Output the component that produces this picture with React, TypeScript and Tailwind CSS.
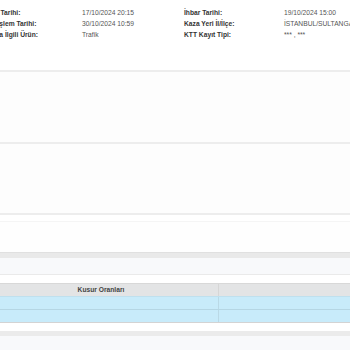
const left = [
  { label: 'Kaza Tarihi:', value: '17/10/2024 20:15' },
  { label: 'Son İşlem Tarihi:', value: '30/10/2024 10:59' },
  { label: 'Dosya İlgili Ürün:', value: 'Trafik' },
]

const right = [
  { label: 'İhbar Tarihi:', value: '19/10/2024 15:00' },
  { label: 'Kaza Yeri İl/İlçe:', value: 'İSTANBUL/SULTANGAZİ' },
  { label: 'KTT Kayıt Tipi:', value: '*** , ***' },
]

export default function App() {
  return (
    <div className="w-[350px] h-[350px] overflow-hidden bg-white font-['Liberation_Sans',Arial,sans-serif] text-[6.7px]">
      {/* Detail panel */}
      <div className="h-[70px] pt-[8px] flex">
        <div className="w-[201px] shrink-0 flex flex-col ml-[-17px]">
          {left.map((r) => (
            <div key={r.label} className="h-[11px] flex items-center whitespace-nowrap">
              <span className="w-[99px] font-bold text-[#333]">{r.label}</span>
              <span className="text-[#555]">{r.value}</span>
            </div>
          ))}
        </div>
        <div className="flex flex-col">
          {right.map((r) => (
            <div key={r.label} className="h-[11px] flex items-center whitespace-nowrap">
              <span className="w-[100px] font-bold text-[#333]">{r.label}</span>
              <span className="text-[#555]">{r.value}</span>
            </div>
          ))}
        </div>
      </div>

      {/* Empty sections */}
      <div className="h-[2px] bg-[#ededed]" />
      <div className="h-[72px] bg-[#fdfdfd] border-b-2 border-[#ededed]" />
      <div className="h-[71px] bg-[#fdfdfd] border-b-2 border-[#ededed]" />
      <div className="h-[7px] bg-white border-b border-[#f5f5f5]" />
      <div className="h-[30px] bg-[#fefefe]" />

      {/* Collapsed bar */}
      <div className="h-[6px] bg-[#e9e9e9] border-t border-[#e0e0e0]" />
      <div className="h-[17px] bg-[#f8f9fb] border-b border-[#eaeaea]" />
      <div className="h-[8px] bg-white" />

      {/* Kusur table */}
      <div className="flex h-[13px] bg-[#e3e4e5] border-t border-[#d8d8d8]">
        <div className="w-[218px] pr-[16px] flex items-center justify-center font-bold text-[#444]">Kusur Oranları</div>
        <div className="border-l border-[#d6d6d6]" />
      </div>
      <div className="flex h-[14px] bg-[#c8ebfa] border-t border-[#bfe0ee] border-b border-b-[#b5d6e4]">
        <div className="w-[218px]" />
        <div className="border-l border-[#bad9e6]" />
      </div>
      <div className="flex h-[13px] bg-[#c8ebfa] border-b border-[#d3d3d3]">
        <div className="w-[218px]" />
        <div className="border-l border-[#bad9e6]" />
      </div>
      <div className="h-[8px] bg-white" />

      <div className="h-[5px] bg-[#ebebeb]" />
      <div className="h-[15px] bg-[#f8f9fb]" />
    </div>
  )
}
